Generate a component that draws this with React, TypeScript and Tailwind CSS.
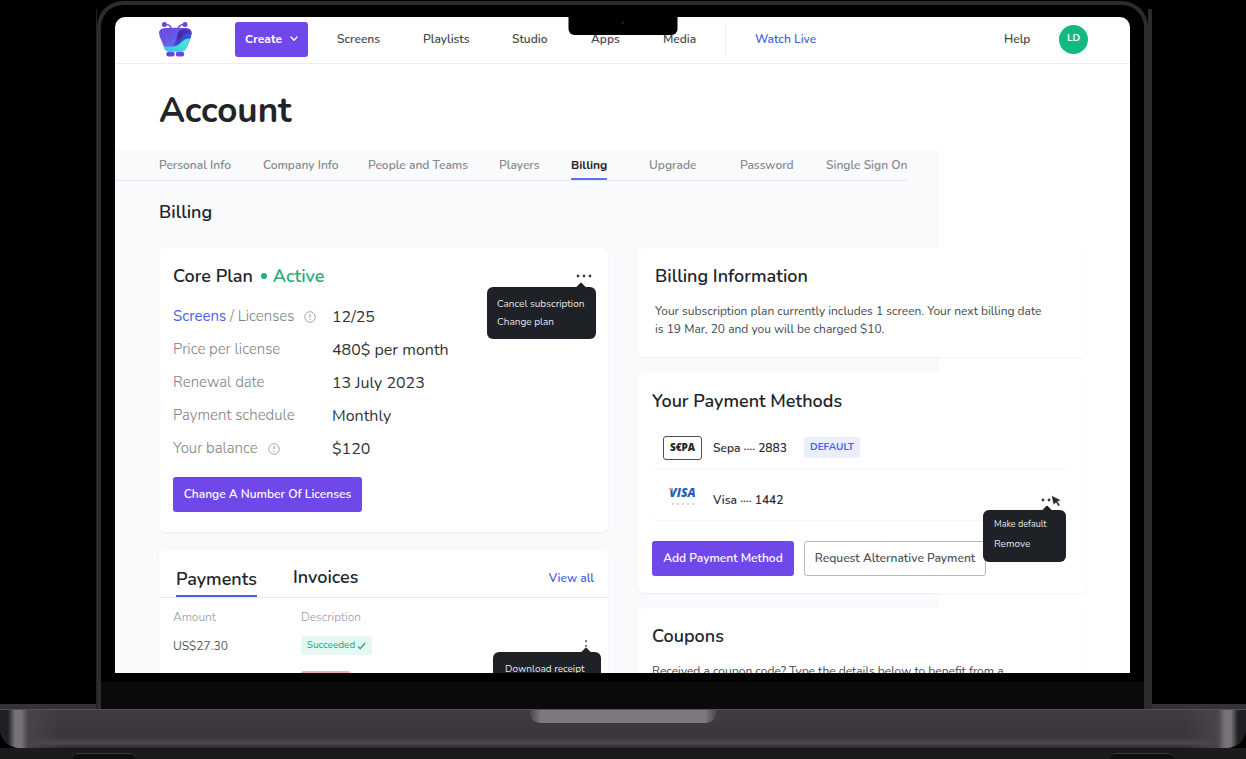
import type { ReactNode } from "react";

const navLinks = ["Screens", "Playlists", "Studio", "Apps", "Media"];
const tabs = [
  "Personal Info",
  "Company Info",
  "People and Teams",
  "Players",
  "Billing",
  "Upgrade",
  "Password",
  "Single Sign On",
];

function Logo() {
  return (
    <svg viewBox="0 0 33 36" className="h-9 w-[33px]" role="img" aria-label="Home">
      <defs>
        <linearGradient id="body" x1="0.1" y1="0" x2="0.6" y2="1">
          <stop offset="0" stopColor="#6a42dc" />
          <stop offset="0.5" stopColor="#6a55e6" />
          <stop offset="1" stopColor="#5a8cf0" />
        </linearGradient>
        <linearGradient id="wave" x1="0" y1="1" x2="1" y2="0">
          <stop offset="0" stopColor="#38b8e6" />
          <stop offset="0.5" stopColor="#3fdfdf" />
          <stop offset="1" stopColor="#4fe6d2" />
        </linearGradient>
        <linearGradient id="fold" x1="0" y1="1" x2="1" y2="0">
          <stop offset="0" stopColor="#6a4be0" />
          <stop offset="0.5" stopColor="#4226a6" />
          <stop offset="1" stopColor="#5b38d0" />
        </linearGradient>
        <clipPath id="shape">
          <path d="M5 7.300c7-.6 15.500-.6 22.500 0 3.500.3 5.300 2.200 5 5.200-.4 3.500-2.500 7.500-3.800 11-1.200 4-2.700 7-5.700 7H10c-3.500 0-4.800-3-6-7C2.700 20 .500 16 .100 12.500c-.3-3 1.400-4.900 4.900-5.200z" />
        </clipPath>
      </defs>
      <g fill="none" stroke="#6745d8" strokeWidth="1.400">
        <path d="M5.500 3.800c4-.6 6.700.7 6.700 4.200" />
        <path d="M26 3.800c-4-.6-6.700.7-6.700 4.200" />
      </g>
      <circle cx="5.400" cy="3.400" r="2.500" fill="#6745d8" />
      <circle cx="26" cy="3.400" r="2.500" fill="#6745d8" />
      <rect x="7.300" y="30.800" width="8.400" height="4.600" rx="2.200" fill="#6745d8" />
      <rect x="16.800" y="30.800" width="8.400" height="4.600" rx="2.200" fill="#6745d8" />
      <g clipPath="url(#shape)">
        <rect width="33" height="32" fill="url(#body)" />
        <path d="M33 7.500c-8-.8-13 .8-14.500 5.500-1 4.500-1.500 8-5 11l19.500 2z" fill="url(#fold)" />
        <path d="M33 12c-6-.5-9 2-10.500 5-1.500 3.500-4 6-8 7.500L33 26z" fill="#2f55d8" />
        <path d="M33 17.500c-5-.5-8 .5-11 4-4.500 5-10 5-19 3.500L5 31h24z" fill="url(#wave)" />
      </g>
    </svg>
  );
}

function Card({ className, children }: { className: string; children: ReactNode }) {
  return (
    <section className={`relative rounded-md bg-white shadow-[0_1px_2px_rgba(30,50,80,0.06)] ${className}`}>
      {children}
    </section>
  );
}

function InfoIcon() {
  return (
    <svg viewBox="0 0 12 12" className="size-3" fill="none" stroke="#9a9da0" aria-hidden="true">
      <circle cx="6" cy="6" r="5.300" strokeWidth="0.900" />
      <path d="M6 3v3.500M6 8v1" strokeWidth="1.100" />
    </svg>
  );
}

function Dots({ vertical, label }: { vertical?: boolean; label: string }) {
  return (
    <button type="button" aria-label={label} className="flex h-4 w-4 items-center justify-center">
      {vertical ? (
        <svg viewBox="0 0 4 14" className="h-[14px] w-1" fill="#4a4d50">
          <circle cx="2" cy="2" r="1" />
          <circle cx="2" cy="7" r="1" />
          <circle cx="2" cy="12" r="1" />
        </svg>
      ) : (
        <svg viewBox="0 0 16 4" className="h-1 w-4" fill="#3a3d40">
          <circle cx="2" cy="2" r="1.400" />
          <circle cx="8" cy="2" r="1.400" />
          <circle cx="14" cy="2" r="1.400" />
        </svg>
      )}
    </button>
  );
}

function Menu({ className, arrow, children }: { className: string; arrow: string; children: ReactNode }) {
  return (
    <div
      className={`absolute z-10 flex h-[52px] flex-col rounded-md bg-[#1e2227] text-[10px] font-normal text-[#e3e5e7] ${className}`}
    >
      <span className={`absolute -top-[3px] size-2 rotate-45 rounded-[1px] bg-[#1e2227] ${arrow}`} />
      {children}
    </div>
  );
}

function MenuItem({ small, children }: { small?: boolean; children: ReactNode }) {
  return (
    <button
      type="button"
      className={`h-[18px] text-left leading-[18px] whitespace-nowrap ${small ? "text-[9px]" : "text-[10px]"}`}
    >
      {children}
    </button>
  );
}

function Header() {
  return (
    <header className="grid h-[47px] shrink-0 grid-cols-[76px_102px_86px_89px_79px_72px_62px_30px_1fr_55px_29px] items-center border-b border-[#eceef0] pr-[42px] pb-[2px] pl-11 text-xs font-semibold text-[#45494d]">
      <a href="#home">
        <Logo />
      </a>
      <button
        type="button"
        className="flex h-[35px] w-[73px] items-center justify-center gap-2 rounded-[3px] bg-[#7047e8] font-bold text-white"
      >
        Create
        <svg viewBox="0 0 8 6" className="h-1.5 w-2" fill="none" stroke="currentColor" strokeWidth="1.400" strokeLinecap="round" strokeLinejoin="round">
          <path d="M1 1l3 3.200L7 1" />
        </svg>
      </button>
      {navLinks.map((link) => (
        <a key={link} href={`#${link.toLowerCase()}`}>
          {link}
        </a>
      ))}
      <span className="h-8 border-l border-[#eceef0]" />
      <a href="#live" className="text-[#4461e0]">
        Watch Live
      </a>
      <a href="#help">Help</a>
      <button type="button" aria-label="LD account" className="flex size-[29px] items-center justify-center rounded-full bg-[#14b881] text-[10px] font-bold text-white">
        LD
      </button>
    </header>
  );
}

function Row({ label, value, info }: { label: ReactNode; value: string; info?: boolean }) {
  return (
    <div className="flex h-[33px] items-center">
      <dt className="flex w-[159px] items-center gap-[10px] text-[15px] text-[#7c8083]">
        <span className="font-light">{label}</span>
        {info && <InfoIcon />}
      </dt>
      <dd className="text-base text-[#303336]">{value}</dd>
    </div>
  );
}

function PlanCard() {
  return (
    <Card className="px-[14px] pt-4 pb-5">
      <div className="flex h-6 items-center">
        <h3 className="text-lg font-[650]">Core Plan</h3>
        <span className="mr-1.5 ml-2 size-1.5 rounded-full bg-[#1fae7c]" />
        <span className="text-lg font-[650] text-[#1fae7c]">Active</span>
        <span className="mr-[2px] ml-auto">
          <Dots label="Plan options" />
        </span>
      </div>
      <Menu className="top-[39px] right-3 w-[109px] pt-2 pl-[10px]" arrow="right-[11px]">
        <MenuItem>Cancel subscription</MenuItem>
        <MenuItem>Change plan</MenuItem>
      </Menu>
      <dl className="mt-3">
        <Row
          label={
            <>
              <a href="#screens" className="font-normal text-[#4a62e8]">
                Screens
              </a>{" "}
              / Licenses
            </>
          }
          value="12/25"
          info
        />
        <Row label="Price per license" value="480$ per month" />
        <Row label="Renewal date" value="13 July 2023" />
        <Row label="Payment schedule" value="Monthly" />
        <Row label="Your balance" value="$120" info />
      </dl>
      <button type="button" className="mt-3 flex h-[35px] w-[189px] items-center justify-center rounded-[3px] bg-[#7047e8] pb-[2px] text-xs font-[650] text-white">
        Change A Number Of Licenses
      </button>
    </Card>
  );
}

function PaymentsCard() {
  return (
    <Card className="h-60">
      <div className="flex h-12 border-b border-[#e3e7ea] pr-[14px] pl-[17px]">
        <button type="button" className="flex h-[47px] items-center border-b-2 border-[#4a62e8] pt-3 text-lg font-[650]">
          Payments
        </button>
        <button type="button" className="ml-9 pt-1.5 text-lg font-[650]">
          Invoices
        </button>
        <a href="#all" className="ml-auto pt-5 text-xs font-[650] text-[#4461e0]">
          View all
        </a>
      </div>
      <table className="w-full table-fixed text-xs">
        <thead>
          <tr className="h-[30px] text-left text-[#94989b]">
            <th className="w-[142px] pt-2 pl-[14px] font-light">Amount</th>
            <th className="pt-2 font-light">Description</th>
            <th className="w-[42px]" aria-label="Actions" />
          </tr>
        </thead>
        <tbody>
          <tr className="h-[35px]">
            <td className="pl-[14px] text-[#55595c]">US$27.30</td>
            <td>
              <span className="flex h-[19px] w-[71px] items-center justify-center gap-[2px] rounded-xs bg-[#e5f9f2] text-[10px] text-[#1fa577]">
                Succeeded
                <svg viewBox="0 0 9 8" className="h-2 w-[9px]" fill="none" stroke="currentColor" strokeWidth="1.200">
                  <path d="M1 4.500l2.200 2.200L8.200 1" />
                </svg>
              </span>
            </td>
            <td className="relative pl-3">
              <Dots vertical label="Payment options" />
              <Menu className="top-[24px] right-[7px] w-[108px] pt-2 pl-3" arrow="right-[11px]">
                <MenuItem>Download receipt</MenuItem>
              </Menu>
            </td>
          </tr>
          <tr className="h-[35px]">
            <td />
            <td>
              <span className="block h-[19px] w-[49px] rounded-xs bg-[#f6a9b4]" />
            </td>
            <td />
          </tr>
        </tbody>
      </table>
    </Card>
  );
}

function SepaLogo() {
  return (
    <span className="flex h-6 w-[39px] items-center justify-center rounded-[3px] border border-[#4c4f52] font-['Open_Sans',sans-serif] text-[10px] font-extrabold text-[#26292b]">
      S€PA
    </span>
  );
}

function VisaLogo() {
  return (
    <span className="relative flex h-6 w-[39px] items-start justify-center">
      <span className="font-['Open_Sans',sans-serif] text-xs leading-[10px] font-extrabold text-[#1f62b5] italic">VISA</span>
      <svg viewBox="0 0 39 24" className="absolute inset-0" aria-hidden="true">
        <path d="M5.500 0h3.500l1.200 4.500C9.300 2.300 7.500 1 5.500.5z" fill="#eba13c" />
        <path d="M9 16h24" stroke="#a9afb6" strokeDasharray="2 3" />
      </svg>
    </span>
  );
}

function MethodRow({ logo, name, children }: { logo: ReactNode; name: string; children: ReactNode }) {
  return (
    <li className="relative flex h-[41px] items-center rounded-md pl-[11px] text-xs font-[650] text-[#2a2d30] shadow-[0_1px_1px_rgba(30,50,80,0.05)]">
      {logo}
      <span className="ml-[11px] w-[91px]">{name}</span>
      {children}
    </li>
  );
}

function MethodsCard() {
  return (
    <Card className="pt-[17px] pr-5 pb-[17px] pl-[14px]">
      <h3 className="text-lg leading-6 font-[650]">Your Payment Methods</h3>
      <ul className="mt-[14px] flex flex-col gap-[11px]">
        <MethodRow logo={<SepaLogo />} name="Sepa ···· 2883">
          <span className="flex h-[21px] w-14 items-center justify-center rounded-[3px] bg-[#eaedfc] text-[10px] font-bold text-[#4a62e8]">
            DEFAULT
          </span>
        </MethodRow>
        <MethodRow logo={<VisaLogo />} name="Visa ···· 1442">
          <span className="mr-[10px] ml-auto">
            <Dots label="Method options" />
          </span>
          <svg viewBox="0 0 10 12" className="absolute top-[16px] right-[6px] h-3 w-[10px]" fill="#26292c" aria-hidden="true">
            <path d="M.5.500L10 5.300 6.600 6.500 9 10.200 7.400 11.300 5 7.600 2.600 10z" stroke="#fff" strokeWidth="0.400" />
          </svg>
          <Menu className="top-[31px] right-[1px] w-[83px] gap-[2px] pt-[5px] pl-[11px]" arrow="left-[60px]">
            <MenuItem small>Make default</MenuItem>
            <MenuItem>Remove</MenuItem>
          </Menu>
        </MethodRow>
      </ul>
      <div className="mt-[21px] flex gap-[10px] text-xs font-[650]">
        <button type="button" className="h-[35px] w-[142px] rounded-[3px] bg-[#7047e8] pb-[2px] text-white">
          Add Payment Method
        </button>
        <button type="button" className="h-[35px] w-[182px] rounded-[3px] border border-[#b4b8bb] bg-white pb-[2px] text-[#505458]">
          Request Alternative Payment
        </button>
      </div>
    </Card>
  );
}

function Account() {
  return (
    <div className="flex h-full flex-col bg-white">
      <Header />
      <div className="flex h-[86px] shrink-0 items-center pt-2 pl-11">
        <h1 className="text-[35px] font-bold">Account</h1>
      </div>
      <main className="grow bg-[linear-gradient(90deg,#f9fafc_81.2%,#ffffff_81.2%)]">
        <nav className="grid h-[31px] w-[792px] grid-cols-[104px_105px_131px_72px_78px_91px_86px_auto] border-b border-[#e6e9eb] pl-11 text-xs font-semibold whitespace-nowrap text-[#85898c]">
          {tabs.map((tab) => (
            <a
              key={tab}
              href={`#${tab.toLowerCase().replaceAll(" ", "-")}`}
              className={
                tab === "Billing"
                  ? "h-[30px] justify-self-start border-b-2 border-[#5f73ee] leading-[30px] font-bold text-[#1f2326]"
                  : "justify-self-start leading-[30px]"
              }
            >
              {tab}
            </a>
          ))}
        </nav>
        <h2 className="mt-[19px] pl-11 text-lg leading-6 font-[650]">Billing</h2>
        <div className="mt-6 grid grid-cols-2 items-start gap-[30px] pr-[43px] pl-11">
          <div className="flex flex-col gap-[18px]">
            <PlanCard />
            <PaymentsCard />
          </div>
          <div className="flex flex-col gap-[15px]">
            <Card className="pt-4 pr-10 pb-[19px] pl-[17px]">
              <h3 className="text-lg leading-6 font-[650]">Billing Information</h3>
              <p className="mt-[14px] text-xs leading-[18px] text-[#45494c]">
                Your subscription plan currently includes 1 screen. Your next billing date is 19 Mar, 20 and you will be
                charged $10.
              </p>
            </Card>
            <MethodsCard />
            <Card className="h-40 px-[14px] pt-4">
              <h3 className="text-lg leading-6 font-[650]">Coupons</h3>
              <p className="mt-[14px] text-xs leading-[18px] text-[#45494c]">
                Received a coupon code? Type the details below to benefit from a
              </p>
            </Card>
          </div>
        </div>
      </main>
    </div>
  );
}

export default function App() {
  return (
    <div className="flex h-screen flex-col overflow-hidden bg-black font-['Nunito','Lato',sans-serif] text-[#212528]">
      <div className="flex min-h-0 grow items-stretch pt-px">
        <div className="h-[5px] w-24 shrink-0 self-end bg-[#343335]" />
        <div className="mt-2 w-px shrink-0 bg-[#232323]" />
        <div className="relative flex min-h-0 min-w-0 grow flex-col rounded-t-[26px] border-x-4 border-t-4 border-[#2c2c2c] bg-black px-[14px] pt-3">
          <div className="absolute top-3 left-1/2 z-20 flex h-[18px] w-[109px] -translate-x-1/2 justify-center rounded-b-md bg-black pt-1">
            <span className="size-[3px] rounded-full bg-[#16163a]" />
          </div>
          <div className="min-h-0 grow overflow-hidden rounded-t-[10px]">
            <Account />
          </div>
          <div className="-mx-[14px] mt-[9px] h-[27px] shrink-0 bg-[#0a0a0a]" />
        </div>
        <div className="mt-2 w-1 shrink-0 bg-[#2b2b2b]" />
        <div className="h-[5px] w-[94px] shrink-0 self-end bg-[#343335]" />
      </div>
      <div className="flex h-[39px] shrink-0 justify-center rounded-b-[20px] border-t border-[#555257] bg-[linear-gradient(90deg,#211f22_8px,#77737b_15px,#77737b_21px,#48444a_28px,transparent_60px,transparent_calc(100%-60px),#48444a_calc(100%-28px),#77737b_calc(100%-21px),#77737b_calc(100%-15px),#211f22_calc(100%-8px)),linear-gradient(180deg,#413c42,#39353a_70%,#4b474d_88%,#2c292d)]">
        <div className="h-[13px] w-[186px] rounded-b-[10px] bg-[linear-gradient(90deg,#4c484e,#7d797e_6%,#7d797e_94%,#4c484e)]" />
      </div>
      <div className="flex h-[11px] shrink-0 justify-between bg-[#1b1a1c] px-[72px]">
        <span className="mt-[5px] h-[6px] w-16 rounded-t-full border-t border-[#3a383c] bg-[#0e0e0f]" />
        <span className="mt-[5px] h-[6px] w-16 rounded-t-full border-t border-[#3a383c] bg-[#0e0e0f]" />
      </div>
    </div>
  );
}
